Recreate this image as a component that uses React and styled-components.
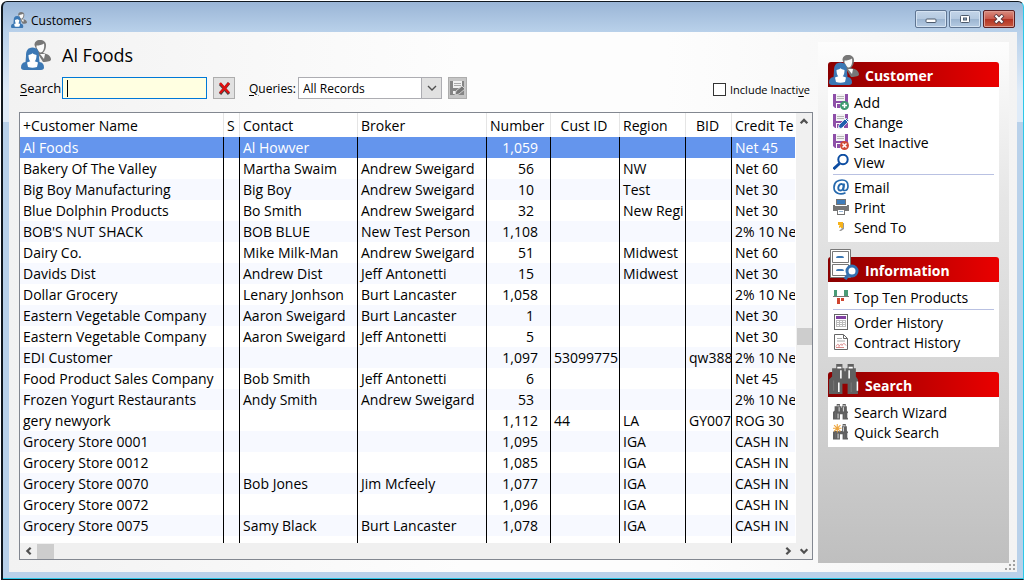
import * as React from "react";
import styled, { createGlobalStyle } from "styled-components";

const GlobalStyle = createGlobalStyle`
  * {
    box-sizing: border-box;
  }
  body {
    margin: 0;
    background: #fff;
    color: #000;
    font-family: "Open Sans", "Noto Sans", sans-serif;
    font-size: 14px;
  }
  button, input, select {
    font: inherit;
    color: inherit;
  }
  u {
    text-underline-offset: 2px;
  }
`;

const Window = styled.div`
  display: flex;
  flex-direction: column;
  min-height: 100vh;
  padding: 1px 0 0 1px;
`;
const Frame = styled.div`
  flex: 1;
  display: flex;
  flex-direction: column;
  padding: 0 6px 7px;
  border: 1px solid #101820;
  border-left-width: 2px;
  border-right-color: #2cc8e8;
  border-radius: 6px 6px 0 0;
  box-shadow: inset 0 -1px 0 #2cc8e8;
  background: linear-gradient(#9ab5d6, #b9d1ea 30px, #dfebf8 90px, #dfebf8 120px, #b9d1ea 120px);
`;
const TitleBar = styled.header`
  display: flex;
  align-items: center;
  height: 30px;
  padding: 6px 2px 0;
  font-size: 12px;
`;
const TitleText = styled.span`
  flex: 1;
  margin-left: 4px;
`;
const CaptionButtons = styled.div`
  display: flex;
  gap: 2px;
  margin-top: -3px;
`;
const CaptionButton = styled.button`
  display: grid;
  place-items: center;
  width: 32px;
  height: 18px;
  padding: 0;
  border: 1px solid ${(p) => (p.$close ? "#5a1f22" : "#5f7592")};
  border-radius: 2px;
  box-shadow: inset 0 0 0 1px ${(p) => (p.$close ? "#dd9a90" : "#d5e3f2")};
  background: ${(p) =>
    p.$close
      ? "linear-gradient(#d98d80, #c9584a 50%, #b23122 50%, #c75a40)"
      : "linear-gradient(#c3d4e8, #b4c9e0 50%, #9bb4d0 50%, #b5cbe3)"};
`;
const Body = styled.main`
  flex: 1;
  display: flex;
  gap: 5px;
  padding: 10px 8px 9px 10px;
  background: linear-gradient(90deg, #f2f2f2, #fdfdfd 45%, #fdfdfd 65%, #f3f3f3);
`;
const Left = styled.section`
  flex: 1;
  min-width: 0;
  display: flex;
  flex-direction: column;
  margin-bottom: 3px;
`;
const Heading = styled.div`
  display: flex;
  align-items: center;
  gap: 11px;
  height: 26px;
  padding-left: 2px;
`;
const H1 = styled.h1`
  margin: 0;
  font-size: 18px;
  font-weight: 400;
`;
const Toolbar = styled.div`
  display: flex;
  align-items: center;
  height: 22px;
  margin: 9px 0 13px;
  font-size: 12px;
`;
const SearchLabel = styled.label`
  width: 42px;
  margin-left: 1px;
  font-size: 13px;
`;
const SearchInput = styled.input`
  width: 145px;
  height: 22px;
  padding: 0 4px;
  border: 1px solid #0078d7;
  outline: none;
  background: linear-gradient(#000, #000) 4px 2px / 1px 17px no-repeat, #ffffe1;
  caret-color: transparent;
`;
const ToolButton = styled.button`
  display: grid;
  place-items: center;
  width: ${(p) => p.$width}px;
  height: 22px;
  padding: 0;
  margin-left: 6px;
  border: 1px solid #adadad;
  background: ${(p) => p.$bg || "#e1e1e1"};
`;
const QueryLabel = styled.label`
  width: 49px;
  margin-left: 14px;
  font-weight: 500;
`;
const SelectBox = styled.div`
  position: relative;
  width: 144px;
  height: 22px;
`;
const Select = styled.select`
  appearance: none;
  width: 100%;
  height: 22px;
  padding: 0 24px 0 4px;
  border: 1px solid #adadb2;
  border-radius: 0;
  background: #fff;
`;
const SelectArrow = styled.span`
  position: absolute;
  top: 0;
  right: 0;
  display: grid;
  place-items: center;
  width: 21px;
  height: 22px;
  border: 1px solid #adadb2;
  background: #e1e1e1;
  pointer-events: none;
`;
const CheckLabel = styled.label`
  display: flex;
  align-items: center;
  gap: 4px;
  margin: 3px 3px 0 auto;
  font-size: 11px;
  font-weight: 500;
`;
const Checkbox = styled.input`
  appearance: none;
  width: 13px;
  height: 13px;
  margin: 0;
  border: 1px solid #333;
  background: #fff;
  &:checked {
    box-shadow: inset 0 0 0 3px #fff;
    background: #333;
  }
`;

const Grid = styled.div`
  flex: 1;
  display: grid;
  grid-template-columns: minmax(0, 1fr) 16px;
  grid-template-rows: 1fr 16px;
  border: 1px solid #828790;
  background: #fff;
`;
const TableWrap = styled.div`
  overflow: hidden;
  margin-right: 1px;
`;
const Table = styled.table`
  width: 100%;
  height: 100%;
  table-layout: fixed;
  border-collapse: separate;
  border-spacing: 0;
`;
const Th = styled.th`
  height: 24px;
  padding: 0 3px;
  padding-right: ${(p) => (p.$align ? 5 : 0)}px;
  border-right: 1px solid #e5e5e5;
  font-weight: 400;
  text-align: ${(p) => p.$align || "left"};
  white-space: nowrap;
  overflow: hidden;
  &:last-child {
    border-right: none;
  }
`;
const Tr = styled.tr`
  background: ${(p) => (p.$selected ? "#6495ed" : p.$odd ? "#fff" : "#f7f9ff")};
  color: ${(p) => (p.$selected ? "#fff" : "#000")};
`;
const Td = styled.td`
  height: ${(p) => (p.$filler ? "auto" : "21px")};
  padding: 0 3px;
  padding-right: ${(p) => p.$right || 0}px;
  border-right: 1px solid #000;
  line-height: 20px;
  text-align: ${(p) => (p.$right ? "right" : "left")};
  white-space: nowrap;
  overflow: hidden;
  &:last-child {
    border-right: none;
  }
`;
const VScroll = styled.div`
  grid-row: 1 / 3;
  grid-column: 2;
  display: flex;
  flex-direction: column;
  align-items: center;
  background: #f0f0f0;
`;
const HScroll = styled.div`
  grid-row: 2;
  grid-column: 1;
  display: flex;
  align-items: center;
  background: #f0f0f0;
`;
const ScrollButton = styled.button`
  display: grid;
  place-items: center;
  width: 17px;
  height: 16px;
  padding: 0;
  border: none;
  background: none;
`;
const Track = styled.div`
  flex: ${(p) => p.$grow};
`;
const Thumb = styled.div`
  width: ${(p) => (p.$vertical ? 15 : 17)}px;
  height: ${(p) => (p.$vertical ? 17 : 15)}px;
  background: #cdcdcd;
`;

const Sidebar = styled.aside`
  display: flex;
  flex-direction: column;
  gap: 15px;
  width: 191px;
  padding: 20px 10px;
  background: linear-gradient(#fdfdfd, #e6e6e6 30%, #d2d2d2 70%, #bfbfbf);
`;
const PanelTitle = styled.h2`
  position: relative;
  height: 25px;
  margin: 0;
  padding-left: 37px;
  border-radius: 3px 3px 0 0;
  background: linear-gradient(90deg, #8a0000, #b80000 45%, #ea0000);
  color: #fff;
  font-size: 14px;
  line-height: 27px;
`;
const PanelIcon = styled.span`
  position: absolute;
  left: 1px;
  bottom: 2px;
  line-height: 0;
`;
const PanelBody = styled.div`
  padding: 5px;
  background: #fff;
`;
const Item = styled.button`
  display: flex;
  align-items: center;
  gap: 5px;
  width: 100%;
  height: 20px;
  padding: 0;
  border: none;
  background: none;
  white-space: nowrap;
  svg {
    flex: none;
  }
`;
const Divider = styled.hr`
  height: 1px;
  margin: 2px 0;
  border: none;
  background: #b9c1e2;
`;
const Grip = styled.span`
  position: absolute;
  right: -7px;
  bottom: -8px;
  line-height: 0;
`;
const SideWrap = styled.div`
  position: relative;
  display: flex;
`;

function UsersIcon({ size }) {
  return (
    <svg width={size} height={size} viewBox="0 0 30 30">
      <path d="M13.500 5c0-3 2-5 5.500-5s6 2 6 5-1 6-3 8c5 1 8 3 8 6.500 0 1.500-3 2.500-8 2.500L17 14z" fill="#777" />
      <path d="M15.500 5.500c3 0 5-.5 7.500-2 .8 4-.5 9-3.500 9-1 0-2.500-2-4-5z" fill="#fafafa" />
      <path d="M19 14l4 5 1-5z" fill="#fafafa" />
      <path d="M5 16c0-5 1.500-8.500 6.500-8.500S18 11 18 16l.5 6c3 .5 4.500 2 4.500 5.500 0 1.500-1 2.500-3 2.500H3c-2 0-3-1-3-2.500C0 24 1.500 22.500 4.500 22z" fill="#3c78b4" />
      <path d="M7.500 15q4-1 4-2 0 1 4 2c0 3-.5 5-1.800 6.200L17 22.500 16 27q-4.500 1.500-9 0l-1-4.500 3.300-1.300C8 20 7.500 18 7.500 15z" fill="#fff" />
    </svg>
  );
}

function DiskIcon({ children }) {
  return (
    <svg width="16" height="16" viewBox="0 0 16 16">
      <path d="M0 0h15v14H2L0 12z" fill="#8e4fa8" />
      <path d="M3 0h9v7H3z" fill="#f4f4f4" />
      <path d="M4 2.500h7M4 4.500h7" stroke="#b5b5b5" />
      <path d="M3 9h8v5H3z" fill="#fff" />
      <path d="M4 10h3v4H4z" fill="#8e4fa8" />
      {children}
    </svg>
  );
}

const AddIcon = () => (
  <DiskIcon>
    <circle cx="11.500" cy="11.500" r="4.500" fill="#3f9a70" />
    <path d="M11.500 9v5M9 11.500h5" stroke="#fff" strokeWidth="1.500" />
  </DiskIcon>
);
const ChangeIcon = () => (
  <DiskIcon>
    <path d="M5 15l1-4 7-7 3 3-7 7z" fill="#1e5fae" stroke="#fff" strokeWidth=".7" />
    <path d="M5 15l.7-2.500 1.800 1.800z" fill="#fff" />
    <path d="M12 5l3 3" stroke="#fff" />
  </DiskIcon>
);
const InactiveIcon = () => (
  <DiskIcon>
    <circle cx="11.500" cy="11.500" r="4.500" fill="#d24a36" />
    <path d="M9.500 9.500l4 4m0-4l-4 4" stroke="#fff" strokeWidth="1.500" />
  </DiskIcon>
);
const ViewIcon = () => (
  <svg width="16" height="16" viewBox="0 0 16 16" fill="none" stroke="#0c4da2">
    <circle cx="10" cy="5.500" r="4.700" strokeWidth="2" />
    <path d="M6.500 9.500l-6 5.500" strokeWidth="3" />
  </svg>
);
const EmailIcon = () => (
  <svg width="16" height="16" viewBox="0 0 16 16" fill="none" stroke="#2669ad">
    <path d="M12.500 13.800C7 16.500 1 14 1 8.500S5 1 9 1s6 2.600 6 6-2 4.500-3.300 4.500-1.600-1-1.300-2.500l.8-4.500" strokeWidth="1.700" />
    <path d="M10.700 7.500C11 5 7.500 4 6 6.500s-.7 5 1.500 5 3-2 3.200-4z" strokeWidth="2" />
  </svg>
);
const PrintIcon = () => (
  <svg width="16" height="16" viewBox="0 0 16 16">
    <path d="M0 6h16v6H0z" fill="#757575" />
    <path d="M3 0h10v6H3z" fill="#757575" />
    <path d="M4 1h8v4H4z" fill="#3f7cba" />
    <path d="M2 6.500h12" stroke="#fff" />
    <path d="M4 10h8v6H4z" fill="#757575" />
    <path d="M5 11h6v4H5z" fill="#fff" />
    <path d="M6 12.500h4" stroke="#9cb9d8" />
  </svg>
);
const SendIcon = () => (
  <svg width="16" height="16" viewBox="0 0 16 16">
    <path d="M9 4h2v6l-3 2H6l3-3z" fill="#999" />
    <path d="M5 3h5v6H8V8L6 9V7l1-1H5z" fill="#f6b21b" />
  </svg>
);
const ChartIcon = () => (
  <svg width="16" height="16" viewBox="0 0 16 16" shapeRendering="crispEdges">
    <path d="M1 1h3v6H1zM11 1h4v6h-4z" fill="#4a9b76" />
    <path d="M4 9h3v6H4zM8 9h3v3H8z" fill="#d0452f" />
    <path d="M0 7h16v1H0z" fill="#777" />
  </svg>
);
const OrderIcon = () => (
  <svg width="16" height="16" viewBox="0 0 16 16" shapeRendering="crispEdges">
    <path d="M1.500.5h13v15h-13z" fill="#fff" stroke="#666" />
    <path d="M3 2h10v3H3z" fill="#8040a0" />
    <path d="M3.500 6.500h9v6h-9zM6.500 6v7M9.500 6v7M3 8.500h10M3 10.500h10" fill="none" stroke="#bbb" />
  </svg>
);
const ContractIcon = () => (
  <svg width="16" height="16" viewBox="0 0 16 16">
    <path d="M1.500.5h9l4 4v11h-13z" fill="#fff" stroke="#666" />
    <path d="M10.500 1v3.500h4" fill="none" stroke="#666" />
    <path d="M4 4.500h5M4 7h8" stroke="#aaa" />
    <path d="M3 12.500c2-4 3-2 3 0 1-2 3-4 3-1 1-3 3-2 4 0M3 13.500h8" fill="none" stroke="#dc8c8c" />
  </svg>
);
function Binoculars({ size, star }) {
  return (
    <svg width={size} height={size} viewBox="0 0 30 30">
      <path d="M7 0h6v4h2v3h1V4h2V0h6v4h2v8l2 3v14H18V19h-5v10H0V15l3-3V4h4z" fill="#606060" />
      <path d="M11.500 6v8M19.500 6v8M9.500 18v9M27.500 17v9M8 3.500h4M19 3.500h4" stroke="#fff" strokeWidth="1.500" />
      <path d="M4.500 16v10M21.500 18v9" stroke="#777" />
      {star && (
        <>
          <path d="M0 0h17v13H0z" fill="#fff" />
          <path d="M8 0v16M0 8h16M2 2l12 12M14 2L2 14" stroke="#eda640" strokeWidth="2" />
        </>
      )}
    </svg>
  );
}
const CabinetIcon = () => (
  <svg width="30" height="32" viewBox="0 0 30 32">
    <path d="M1.500 1.500h20v28h-20z" fill="#fff" stroke="#777" />
    <path d="M3.500 3.500h16v11h-16zM3.500 16.500h16v11h-16z" fill="#fff" stroke="#777" />
    <path d="M7 10q0-2 2-2h4q2 0 2 2zM7 23q0-2 2-2h4q2 0 2 2z" fill="#3c78b4" />
    <circle cx="23" cy="23" r="5" fill="#fff" stroke="#3470b0" strokeWidth="3" />
    <path d="M19 27l-3 4" stroke="#3470b0" strokeWidth="3.500" />
  </svg>
);
const SaveIcon = () => (
  <svg width="17" height="17" viewBox="0 0 17 17">
    <path d="M1 1h14v14H1z" fill="#858585" />
    <path d="M4 1h9v7H4zM4 11h4v3H4z" fill="#f1f1f1" />
    <path d="M5 3.500h7M5 5.500h7" stroke="#aaa" />
    <path d="M6 15l1-4 6-5 3 3-6 5z" fill="#777" stroke="#d0d0d0" />
  </svg>
);
const chevrons = {
  up: "M1.500 6.500l3-3 3 3",
  down: "M1.500 3l3 3 3-3",
  left: "M6 1.500l-3 3 3 3",
  right: "M3 1.500l3 3-3 3",
};
const Chevron = ({ dir, size = 10, width = 2 }) => (
  <svg width={size} height={size} viewBox="0 0 9 9">
    <path d={chevrons[dir]} fill="none" stroke="#505050" strokeWidth={width} />
  </svg>
);

const columns = [
  { title: "+Customer Name", width: 204 },
  { title: "S", width: 16, align: "center" },
  { title: "Contact", width: 118 },
  { title: "Broker", width: 129 },
  { title: "Number", width: 64 },
  { title: "Cust ID", width: 69, align: "center" },
  { title: "Region", width: 66 },
  { title: "BID", width: 46, align: "center" },
  { title: "Credit Te" },
];

// name, status, contact, broker, number, cust id, region, bid, terms
const customers = [
  ["Al Foods", "", "Al Howver", "", "1,059", "", "", "", "Net 45"],
  ["Bakery Of The Valley", "", "Martha Swaim", "Andrew Sweigard", "56", "", "NW", "", "Net 60"],
  ["Big Boy Manufacturing", "", "Big Boy", "Andrew Sweigard", "10", "", "Test", "", "Net 30"],
  ["Blue Dolphin Products", "", "Bo Smith", "Andrew Sweigard", "32", "", "New Regi", "", "Net 30"],
  ["BOB'S NUT SHACK", "", "BOB BLUE", "New Test Person", "1,108", "", "", "", "2% 10 Ne"],
  ["Dairy Co.", "", "Mike Milk-Man", "Andrew Sweigard", "51", "", "Midwest", "", "Net 60"],
  ["Davids Dist", "", "Andrew Dist", "Jeff Antonetti", "15", "", "Midwest", "", "Net 30"],
  ["Dollar Grocery", "", "Lenary Jonhson", "Burt Lancaster", "1,058", "", "", "", "2% 10 Ne"],
  ["Eastern Vegetable Company", "", "Aaron Sweigard", "Burt Lancaster", "1", "", "", "", "Net 30"],
  ["Eastern Vegetable Company", "", "Aaron Sweigard", "Jeff Antonetti", "5", "", "", "", "Net 30"],
  ["EDI Customer", "", "", "", "1,097", "53099775", "", "qw388", "2% 10 Ne"],
  ["Food Product Sales Company", "", "Bob Smith", "Jeff Antonetti", "6", "", "", "", "Net 45"],
  ["Frozen Yogurt Restaurants", "", "Andy Smith", "Andrew Sweigard", "53", "", "", "", "2% 10 Ne"],
  ["gery newyork", "", "", "", "1,112", "44", "LA", "GY007", "ROG 30"],
  ["Grocery Store 0001", "", "", "", "1,095", "", "IGA", "", "CASH IN"],
  ["Grocery Store 0012", "", "", "", "1,085", "", "IGA", "", "CASH IN"],
  ["Grocery Store 0070", "", "Bob Jones", "Jim Mcfeely", "1,077", "", "IGA", "", "CASH IN"],
  ["Grocery Store 0072", "", "", "", "1,096", "", "IGA", "", "CASH IN"],
  ["Grocery Store 0075", "", "Samy Black", "Burt Lancaster", "1,078", "", "IGA", "", "CASH IN"],
];

const panels = [
  {
    title: "Customer",
    icon: <UsersIcon size={30} />,
    groups: [
      [
        ["Add", <AddIcon />],
        ["Change", <ChangeIcon />],
        ["Set Inactive", <InactiveIcon />],
        ["View", <ViewIcon />],
      ],
      [
        ["Email", <EmailIcon />],
        ["Print", <PrintIcon />],
        ["Send To", <SendIcon />],
      ],
    ],
  },
  {
    title: "Information",
    icon: <CabinetIcon />,
    groups: [
      [["Top Ten Products", <ChartIcon />]],
      [
        ["Order History", <OrderIcon />],
        ["Contract History", <ContractIcon />],
      ],
    ],
  },
  {
    title: "Search",
    icon: <Binoculars size={31} />,
    groups: [
      [
        ["Search Wizard", <Binoculars size={16} />],
        ["Quick Search", <Binoculars size={16} star />],
      ],
    ],
  },
];

function CustomerTable({ selected, setSelected }) {
  return (
    <Table>
      <colgroup>
        {columns.map((c) => (
          <col key={c.title} width={c.width} />
        ))}
      </colgroup>
      <thead>
        <tr>
          {columns.map((c) => (
            <Th key={c.title} $align={c.align}>{c.title}</Th>
          ))}
        </tr>
      </thead>
      <tbody>
        {customers.map((row, i) => (
          <Tr key={i} $selected={i === selected} $odd={i % 2 === 1} onClick={() => setSelected(i)}>
            {row.map((value, j) => (
              <Td key={j} $right={j === 4 && (value.length > 3 ? 12 : 16)}>{value}</Td>
            ))}
          </Tr>
        ))}
        <tr>
          {columns.map((c) => (
            <Td key={c.title} $filler />
          ))}
        </tr>
      </tbody>
    </Table>
  );
}

export default function App() {
  const [search, setSearch] = React.useState("");
  const [selected, setSelected] = React.useState(0);

  return (
    <Window>
      <GlobalStyle />
      <Frame>
        <TitleBar>
          <UsersIcon size={16} />
          <TitleText>Customers</TitleText>
          <CaptionButtons>
            <CaptionButton aria-label="Minimize">
              <svg width="12" height="10" viewBox="0 0 12 10">
                <rect x="1" y="5" width="10" height="3.500" rx="1" fill="#fff" stroke="#4d5b6d" />
              </svg>
            </CaptionButton>
            <CaptionButton aria-label="Maximize">
              <svg width="12" height="10" viewBox="0 0 12 10">
                <rect x="1.500" y="1.500" width="9" height="7" rx="1" fill="#fff" stroke="#4d5b6d" />
                <rect x="4.500" y="4" width="3" height="2" fill="#9bb4d0" stroke="#4d5b6d" />
              </svg>
            </CaptionButton>
            <CaptionButton aria-label="Close" $close>
              <svg width="12" height="10" viewBox="0 0 12 10">
                <path d="M2 1l8 8M10 1L2 9" stroke="#5a3a40" strokeWidth="4" />
                <path d="M2.500 1.500l7 7M9.500 1.500l-7 7" stroke="#fff" strokeWidth="2.200" />
              </svg>
            </CaptionButton>
          </CaptionButtons>
        </TitleBar>
        <Body>
          <Left>
            <Heading>
              <UsersIcon size={30} />
              <H1>Al Foods</H1>
            </Heading>
            <Toolbar>
              <SearchLabel htmlFor="search"><u>S</u>earch</SearchLabel>
              <SearchInput id="search" value={search} onChange={(e) => setSearch(e.target.value)} />
              <ToolButton $width={22} aria-label="Clear search" onClick={() => setSearch("")}>
                <svg width="13" height="13" viewBox="0 0 13 13">
                  <path d="M2 2l9 10M11 1L2 12" stroke="#444" strokeWidth="3" />
                  <path d="M2 1l9 10M11 1L2 11" stroke="#e01010" strokeWidth="2.500" />
                </svg>
              </ToolButton>
              <QueryLabel htmlFor="queries"><u>Q</u>ueries:</QueryLabel>
              <SelectBox>
                <Select id="queries">
                  <option>All Records</option>
                </Select>
                <SelectArrow>
                  <Chevron dir="down" size={12} width={1} />
                </SelectArrow>
              </SelectBox>
              <ToolButton $width={19} $bg="#c6c6c6" aria-label="Save query">
                <SaveIcon />
              </ToolButton>
              <CheckLabel>
                <Checkbox type="checkbox" />
                <span>Include Inacti<u>v</u>e</span>
              </CheckLabel>
            </Toolbar>
            <Grid>
              <TableWrap>
                <CustomerTable selected={selected} setSelected={setSelected} />
              </TableWrap>
              <VScroll>
                <ScrollButton aria-label="Scroll up"><Chevron dir="up" /></ScrollButton>
                <Track $grow={50} />
                <Thumb $vertical />
                <Track $grow={50} />
                <ScrollButton aria-label="Scroll down"><Chevron dir="down" /></ScrollButton>
              </VScroll>
              <HScroll>
                <ScrollButton aria-label="Scroll left"><Chevron dir="left" /></ScrollButton>
                <Thumb />
                <Track $grow={1} />
                <ScrollButton aria-label="Scroll right"><Chevron dir="right" /></ScrollButton>
              </HScroll>
            </Grid>
          </Left>
          <SideWrap>
            <Sidebar>
              {panels.map((panel) => (
                <section key={panel.title}>
                  <PanelTitle>
                    <PanelIcon>{panel.icon}</PanelIcon>
                    {panel.title}
                  </PanelTitle>
                  <PanelBody>
                    {panel.groups.map((group, i) => (
                      <React.Fragment key={i}>
                        {i > 0 && <Divider />}
                        {group.map(([label, icon]) => (
                          <Item key={label}>
                            {icon}
                            {label}
                          </Item>
                        ))}
                      </React.Fragment>
                    ))}
                  </PanelBody>
                </section>
              ))}
            </Sidebar>
            <Grip>
              <svg width="11" height="11" viewBox="0 0 11 11">
                <path d="M8 0h2v2H8zM4 4h2v2H4zM8 4h2v2H8zM0 8h2v2H0zM4 8h2v2H4zM8 8h2v2H8z" fill="#a0a0a0" />
              </svg>
            </Grip>
          </SideWrap>
        </Body>
      </Frame>
    </Window>
  );
}
